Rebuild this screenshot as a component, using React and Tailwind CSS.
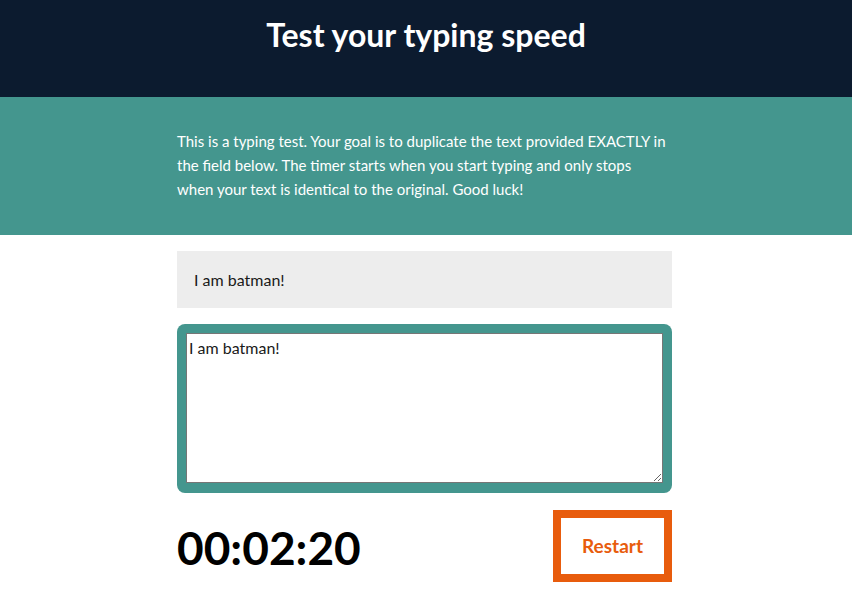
import React, { useState } from 'react';

const font = { fontFamily: '"Lato", "Liberation Sans", sans-serif' };

export default function App() {
  const [text, setText] = useState('I am batman!');

  return (
    <div className="min-h-screen bg-white" style={font}>
      <header className="h-[97px] bg-[#0c1b2f] flex justify-center pt-[15px]">
        <h1 className="text-[32px] font-bold text-white leading-[40px]">Test your typing speed</h1>
      </header>

      <section className="h-[138px] bg-[#44968e] pl-[177px]">
        <div className="w-[491px] pt-[32px]">
          <p className="text-[15px] leading-[24px] text-white">
            This is a typing test. Your goal is to duplicate the text provided EXACTLY in the field below. The timer
            starts when you start typing and only stops when your text is identical to the original. Good luck!
          </p>
        </div>
      </section>

      <main className="pl-[177px] pt-[16px]">
        <div className="w-[495px]">
          <div className="h-[57px] bg-[#ededed] flex items-center px-[17px] text-[16px] text-[#1a1a1a]">
            I am batman!
          </div>

          <div className="mt-[16px] rounded-[8px] bg-[#44968e] p-[9px] h-[169px]">
            <textarea
              value={text}
              onChange={(e) => setText(e.target.value)}
              className="w-full h-[150px] block bg-white border border-[#767676] px-[2px] py-[2px] text-[16px] text-[#1a1a1a] outline-none resize-y"
              style={font}
            />
          </div>

          <div className="mt-[17px] flex items-center justify-between">
            <div className="text-[46px] font-bold text-black leading-none pt-[4px]">00:02:20</div>
            <button className="w-[119px] h-[72px] border-[8px] border-[#e85c0d] bg-white text-[#e85c0d] text-[19px] font-bold">
              Restart
            </button>
          </div>
        </div>
      </main>
    </div>
  );
}
